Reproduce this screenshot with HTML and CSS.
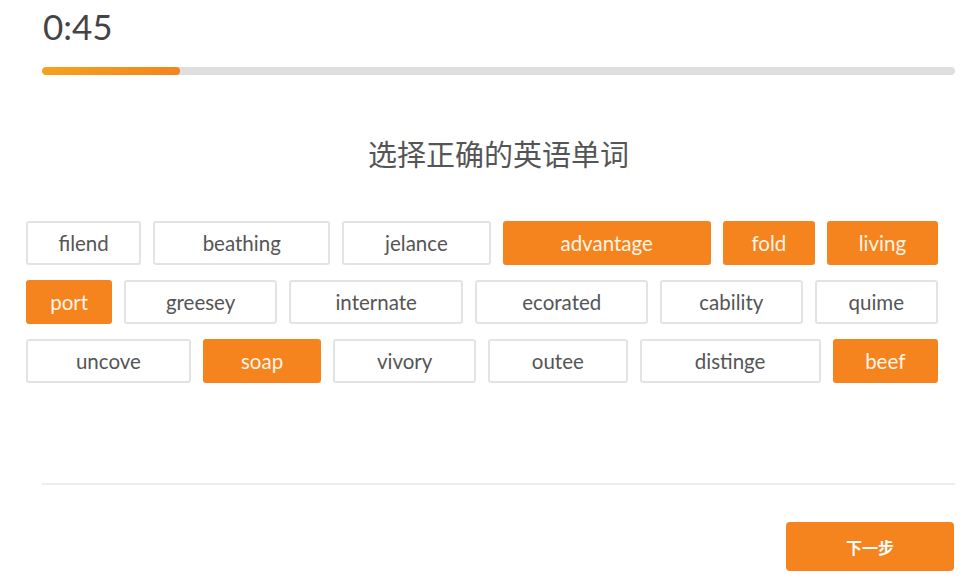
FILE: index.html
```html
<!DOCTYPE html>
<html lang="zh">
<head>
<meta charset="utf-8">
<title>选择正确的英语单词</title>
<link rel="stylesheet" href="styles.css">
</head>
<body>
<div class="page">
  <header class="top">
    <div class="timer">0:45</div>
    <div class="progress"><div class="progress-fill" style="width: 15.1%"></div></div>
  </header>
  <h1 class="title">选择正确的英语单词</h1>
  <div class="words">
    <div class="row row-1">
      <button class="word">filend</button>
      <button class="word">beathing</button>
      <button class="word">jelance</button>
      <button class="word selected">advantage</button>
      <button class="word selected">fold</button>
      <button class="word selected">living</button>
    </div>
    <div class="row row-2">
      <button class="word selected">port</button>
      <button class="word">greesey</button>
      <button class="word">internate</button>
      <button class="word">ecorated</button>
      <button class="word">cability</button>
      <button class="word">quime</button>
    </div>
    <div class="row row-3">
      <button class="word">uncove</button>
      <button class="word selected">soap</button>
      <button class="word">vivory</button>
      <button class="word">outee</button>
      <button class="word">distinge</button>
      <button class="word selected">beef</button>
    </div>
  </div>
  <div class="divider"></div>
  <div class="actions">
    <button class="next">下一步</button>
  </div>
</div>
</body>
</html>
```

FILE: styles.css
```css
* { box-sizing: border-box; }
html, body {
  margin: 0;
  padding: 0;
  background: #ffffff;
}
body {
  font-family: Lato, "Noto Sans CJK SC", sans-serif;
  color: #555;
}
.page {
  width: 980px;
  height: 588px;
  display: flex;
  flex-direction: column;
  overflow: hidden;
}
.top {
  padding: 6px 25px 0 42px;
}
.timer {
  font-size: 35px;
  line-height: 40px;
  color: #444;
  padding-left: 1px;
}
.progress {
  margin-top: 21px;
  height: 8px;
  border-radius: 4px;
  background: #dedede;
  overflow: hidden;
}
.progress-fill {
  height: 100%;
  border-radius: 4px;
  background: linear-gradient(90deg, #f6a21c, #f38420);
}
.title {
  margin: 58px 0 0 0;
  padding-left: 17px;
  font-family: "Noto Sans CJK SC", sans-serif;
  font-weight: 400;
  font-size: 29px;
  line-height: 40px;
  text-align: center;
  color: #555;
}
.words {
  margin: 48px 0 0 26px;
  width: 912px;
  display: flex;
  flex-direction: column;
  gap: 15px;
}
.row {
  display: grid;
  column-gap: 12px;
  height: 44px;
}
.row-1 { grid-template-columns: 115fr 177fr 148fr 208fr 92fr 111fr; }
.row-2 { grid-template-columns: 86fr 152fr 174fr 172fr 142fr 123fr; }
.row-3 { grid-template-columns: 164fr 118fr 142fr 139fr 180fr 105fr; }
.word {
  font-family: Lato, sans-serif;
  font-size: 20.5px;
  color: #555;
  background: #fff;
  border: 2px solid #e3e3e3;
  border-radius: 3px;
  padding: 0;
  margin: 0;
  height: 44px;
}
.word.selected {
  background: #f5841f;
  border-color: #f5841f;
  color: #fff4e6;
}
.divider {
  margin: 100px 25px 0 42px;
  height: 2px;
  background: #eeeeee;
}
.actions {
  display: flex;
  justify-content: flex-end;
  padding: 37px 26px 0 0;
}
.next {
  width: 168px;
  height: 49px;
  border: none;
  border-radius: 4px;
  background: #f5841f;
  color: #fff;
  font-family: "Noto Sans CJK SC", sans-serif;
  font-weight: 700;
  font-size: 16px;
  padding: 0;
}
```
